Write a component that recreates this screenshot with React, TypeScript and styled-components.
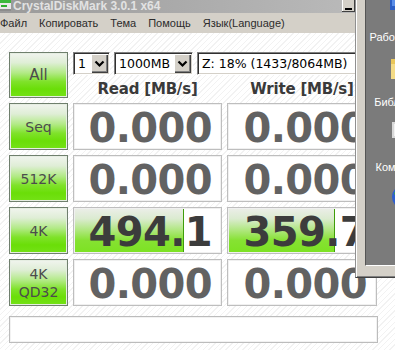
import React from 'react';
import styled, { createGlobalStyle } from 'styled-components';

const GlobalStyle = createGlobalStyle`
  html, body { margin: 0; padding: 0; background: #ffffff; }
  body {
    width: 395px;
    height: 350px;
    overflow: hidden;
    font-family: "Liberation Sans", Arial, sans-serif;
  }
`;

const Screen = styled.div`
  position: relative;
  width: 395px;
  height: 350px;
  overflow: hidden;
`;

const Window = styled.div`
  display: flex;
  flex-direction: column;
  width: 395px;
  height: 350px;
`;

const TitleBar = styled.div`
  display: flex;
  align-items: flex-start;
  height: 13px;
  padding-right: 11px;
  box-sizing: border-box;
  background: linear-gradient(to right, #9a9a9a 0%, #acacac 50%, #bdbdbd 100%);
`;

const AppIcon = styled.svg`
  flex: none;
  width: 11px;
  height: 12px;
`;

const Title = styled.span`
  margin-left: 2px;
  font: bold 12px/12px "Liberation Sans", Arial, sans-serif;
  color: #e2e2e2;
  white-space: nowrap;
`;

const Caption = styled.div`
  margin-left: auto;
  display: flex;
  gap: 1px;
`;

const CaptionButton = styled.div<{ $extra?: number }>`
  width: 13px;
  height: 12px;
  margin-left: ${(p) => p.$extra ?? 0}px;
  box-sizing: border-box;
  background: #d4d0c8;
  border-right: 1px solid #404040;
  border-bottom: 1px solid #404040;
  box-shadow: inset 1px 0 #ffffff;
  display: flex;
  align-items: flex-end;
  justify-content: center;
  padding-bottom: 1px;
`;

const MinGlyph = styled.span`
  width: 7px;
  height: 2px;
  background: #000;
`;

const MenuBar = styled.div`
  display: flex;
  align-items: center;
  gap: 12px;
  height: 20px;
  background: #d4d0c8;
  font: 11px "Liberation Sans", Arial, sans-serif;
  color: #2c2c2c;
`;

const MenuItem = styled.span`
  white-space: nowrap;
`;

const Client = styled.div`
  flex: 1;
  padding: 19px 0 0 9px;
  background: repeating-linear-gradient(135deg, #ffffff 0px, #ffffff 3px, #f2f2f2 3px, #f2f2f2 4px);
`;

const Board = styled.div`
  display: grid;
  grid-template-columns: 59px 149px 150px;
  grid-template-rows: 46px repeat(4, 47px);
  column-gap: 5px;
  row-gap: 5px;
`;

const GreenButton = styled.div<{ $size: number }>`
  box-sizing: border-box;
  display: flex;
  flex-direction: column;
  align-items: center;
  justify-content: center;
  border: 1px solid #6f7f6d;
  box-shadow: inset 0 0 0 1px #e6eee2;
  background: linear-gradient(
    to bottom,
    #f1f4ef 0%,
    #dfeed6 22%,
    #b2ea86 45%,
    #7fe22a 65%,
    #6ade08 82%,
    #74e216 100%
  );
  font: ${(p) => p.$size}px/18px "DejaVu Sans", sans-serif;
  color: #4c4c4c;
  text-align: center;
`;

const TopPanel = styled.div`
  grid-column: 2 / 4;
  display: flex;
  flex-direction: column;
`;

const SelectRow = styled.div`
  display: flex;
  gap: 4px;
  height: 23px;
`;

const Combo = styled.div<{ $w: number }>`
  width: ${(p) => p.$w}px;
  height: 23px;
  box-sizing: border-box;
  display: flex;
  background: #ffffff;
  border: 1px solid;
  border-color: #808080 #ffffff #ffffff #808080;
  box-shadow: inset 1px 1px #303030, inset -1px -1px #d4d0c8;
  padding: 1px 1px 1px 1px;
`;

const ComboText = styled.span`
  flex: 1;
  padding-left: 3px;
  font: 12.5px/19px "DejaVu Sans", sans-serif;
  color: #000;
  white-space: nowrap;
  overflow: hidden;
`;

const DropButton = styled.div`
  flex: none;
  width: 17px;
  box-sizing: border-box;
  display: flex;
  align-items: center;
  justify-content: center;
  background: #d4d0c8;
  box-shadow: inset 1px 1px #ffffff, inset -1px -1px #404040, inset -2px -2px #808080;
`;

const HeaderRow = styled.div`
  flex: 1;
  display: grid;
  grid-template-columns: 149px 150px;
  column-gap: 5px;
`;

const Header = styled.div`
  display: flex;
  align-items: flex-end;
  justify-content: center;
  font: bold 15px/18px "DejaVu Sans", sans-serif;
  letter-spacing: -0.2px;
  color: #3a3a3a;
  white-space: nowrap;
`;

const ValueCell = styled.div<{ $fill: number; $active: boolean }>`
  box-sizing: border-box;
  display: flex;
  align-items: center;
  justify-content: flex-end;
  padding: 3px 9px 0 0;
  border: 1px solid #bebebe;
  box-shadow: inset 0 0 0 1px #f0f0f0;
  background: ${(p) =>
    p.$fill > 0
      ? `linear-gradient(#3f9d0a, #3f9d0a) ${p.$fill}px 0 / 1px 100% no-repeat,
         linear-gradient(to bottom, #eceee9 0%, #dbebd0 24%, #aee77c 50%, #86e232 72%, #7ce222 100%) 0 0 / ${p.$fill}px 100% no-repeat,
         #ffffff`
      : '#ffffff'};
  font: bold 40px/40px "DejaVu Sans", sans-serif;
  letter-spacing: -0.6px;
  color: ${(p) => (p.$active ? '#3c3c3c' : '#626262')};
  overflow: hidden;
  white-space: nowrap;
`;

const StatusBox = styled.div`
  width: 369px;
  height: 27px;
  margin-top: 10px;
  box-sizing: border-box;
  background: #ffffff;
  border: 1px solid #bcbcbc;
  box-shadow: inset 0 0 0 1px #f2f2f2;
`;

/* the other window lying over the right edge */
const OtherWindow = styled.div`
  position: absolute;
  left: 355px;
  top: 0;
  width: 60px;
  height: 278px;
  box-sizing: border-box;
  display: flex;
  padding: 0 0 11px 9px;
  background: #d4d0c8;
  border-left: 1px solid #909090;
  border-bottom: 1px solid #404040;
  box-shadow: inset 1px 0 #ffffff, inset 0 -1px #808080;
`;

const DesktopPane = styled.div`
  flex: 1;
  position: relative;
  overflow: hidden;
  background: #7b7b7b;
  border-left: 1px solid #555555;
  border-bottom: 1px solid #ffffff;
`;

const IconColumn = styled.div`
  display: flex;
  flex-direction: column;
  width: 76px;
  margin-top: -14px;
`;

const DesktopItem = styled.div`
  display: flex;
  flex-direction: column;
  align-items: center;
  height: 65px;
`;

const DesktopGlyph = styled.svg`
  width: 32px;
  height: 32px;
  flex: none;
`;

const DesktopLabel = styled.span`
  margin-top: 13px;
  font: 11px/13px "Liberation Sans", Arial, sans-serif;
  color: #ffffff;
  white-space: nowrap;
`;

const Chevron = () => (
  <svg width="11" height="8" viewBox="0 0 11 8">
    <polyline points="1.5,1.5 5.5,5.5 9.5,1.5" fill="none" stroke="#000" strokeWidth="2.2" />
  </svg>
);

type Row = {
  label: string[];
  size: number;
  read: string;
  write: string;
  readFill: number;
  writeFill: number;
};

const rows: Row[] = [
  { label: ['Seq'], size: 14, read: '0.000', write: '0.000', readFill: 0, writeFill: 0 },
  { label: ['512K'], size: 14, read: '0.000', write: '0.000', readFill: 0, writeFill: 0 },
  { label: ['4K'], size: 14, read: '494.1', write: '359.7', readFill: 109, writeFill: 106 },
  { label: ['4K', 'QD32'], size: 14, read: '0.000', write: '0.000', readFill: 0, writeFill: 0 },
];

export default function App() {
  return (
    <Screen>
      <GlobalStyle />
      <Window>
        <TitleBar>
          <AppIcon viewBox="0 0 11 12">
            <rect x="0" y="0" width="11" height="3" fill="#3cb83c" />
            <rect x="0" y="3" width="11" height="6" fill="#e8e8e8" />
            <rect x="1" y="5" width="6" height="2" fill="#2fae2f" />
            <rect x="0" y="9" width="11" height="2" fill="#8c8c8c" />
          </AppIcon>
          <Title>CrystalDiskMark 3.0.1 x64</Title>
          <Caption>
            <CaptionButton>
              <MinGlyph />
            </CaptionButton>
            <CaptionButton />
            <CaptionButton $extra={1} />
          </Caption>
        </TitleBar>
        <MenuBar>
          <MenuItem>Файл</MenuItem>
          <MenuItem>Копировать</MenuItem>
          <MenuItem>Тема</MenuItem>
          <MenuItem>Помощь</MenuItem>
          <MenuItem>Язык(Language)</MenuItem>
        </MenuBar>
        <Client>
          <Board>
            <GreenButton $size={15}>All</GreenButton>
            <TopPanel>
              <SelectRow>
                <Combo $w={37}>
                  <ComboText>1</ComboText>
                  <DropButton>
                    <Chevron />
                  </DropButton>
                </Combo>
                <Combo $w={79}>
                  <ComboText>1000MB</ComboText>
                  <DropButton>
                    <Chevron />
                  </DropButton>
                </Combo>
                <Combo $w={180}>
                  <ComboText>Z: 18% (1433/8064MB)</ComboText>
                  <DropButton>
                    <Chevron />
                  </DropButton>
                </Combo>
              </SelectRow>
              <HeaderRow>
                <Header>Read [MB/s]</Header>
                <Header>Write [MB/s]</Header>
              </HeaderRow>
            </TopPanel>
            {rows.map((r) => (
              <React.Fragment key={r.label.join(' ')}>
                <GreenButton $size={r.size}>
                  {r.label.map((l) => (
                    <span key={l}>{l}</span>
                  ))}
                </GreenButton>
                <ValueCell $fill={r.readFill} $active={r.readFill > 0}>
                  {r.read}
                </ValueCell>
                <ValueCell $fill={r.writeFill} $active={r.writeFill > 0}>
                  {r.write}
                </ValueCell>
              </React.Fragment>
            ))}
          </Board>
          <StatusBox />
        </Client>
      </Window>
      <OtherWindow>
        <DesktopPane>
          <IconColumn>
            <DesktopItem>
              <DesktopGlyph viewBox="0 0 32 32">
                <rect x="2" y="2" width="28" height="22" fill="#2d5fc4" />
                <rect x="4" y="4" width="24" height="16" fill="#5a8ee8" />
              </DesktopGlyph>
              <DesktopLabel>Рабочий стол</DesktopLabel>
            </DesktopItem>
            <DesktopItem>
              <DesktopGlyph viewBox="0 0 32 32">
                <path d="M3 8 h9 l3 3 h14 v17 h-26 z" fill="#e9c65a" />
                <rect x="3" y="13" width="26" height="15" fill="#f4db86" />
              </DesktopGlyph>
              <DesktopLabel>Библиотеки</DesktopLabel>
            </DesktopItem>
            <DesktopItem>
              <DesktopGlyph viewBox="0 0 32 32">
                <rect x="4" y="6" width="24" height="16" fill="#d8d8d8" />
                <rect x="6" y="8" width="20" height="12" fill="#f2f2f2" />
                <rect x="10" y="24" width="12" height="3" fill="#b0b0b0" />
              </DesktopGlyph>
              <DesktopLabel>Компьютер</DesktopLabel>
            </DesktopItem>
            <DesktopItem>
              <DesktopGlyph viewBox="0 0 32 32">
                <circle cx="16" cy="16" r="12" fill="#2f5fd0" />
                <path d="M6 12 q6 -6 10 0 q4 6 10 2 v6 q-6 6 -12 2 q-6 -4 -8 -10z" fill="#3cae3c" />
              </DesktopGlyph>
            </DesktopItem>
          </IconColumn>
        </DesktopPane>
      </OtherWindow>
    </Screen>
  );
}
